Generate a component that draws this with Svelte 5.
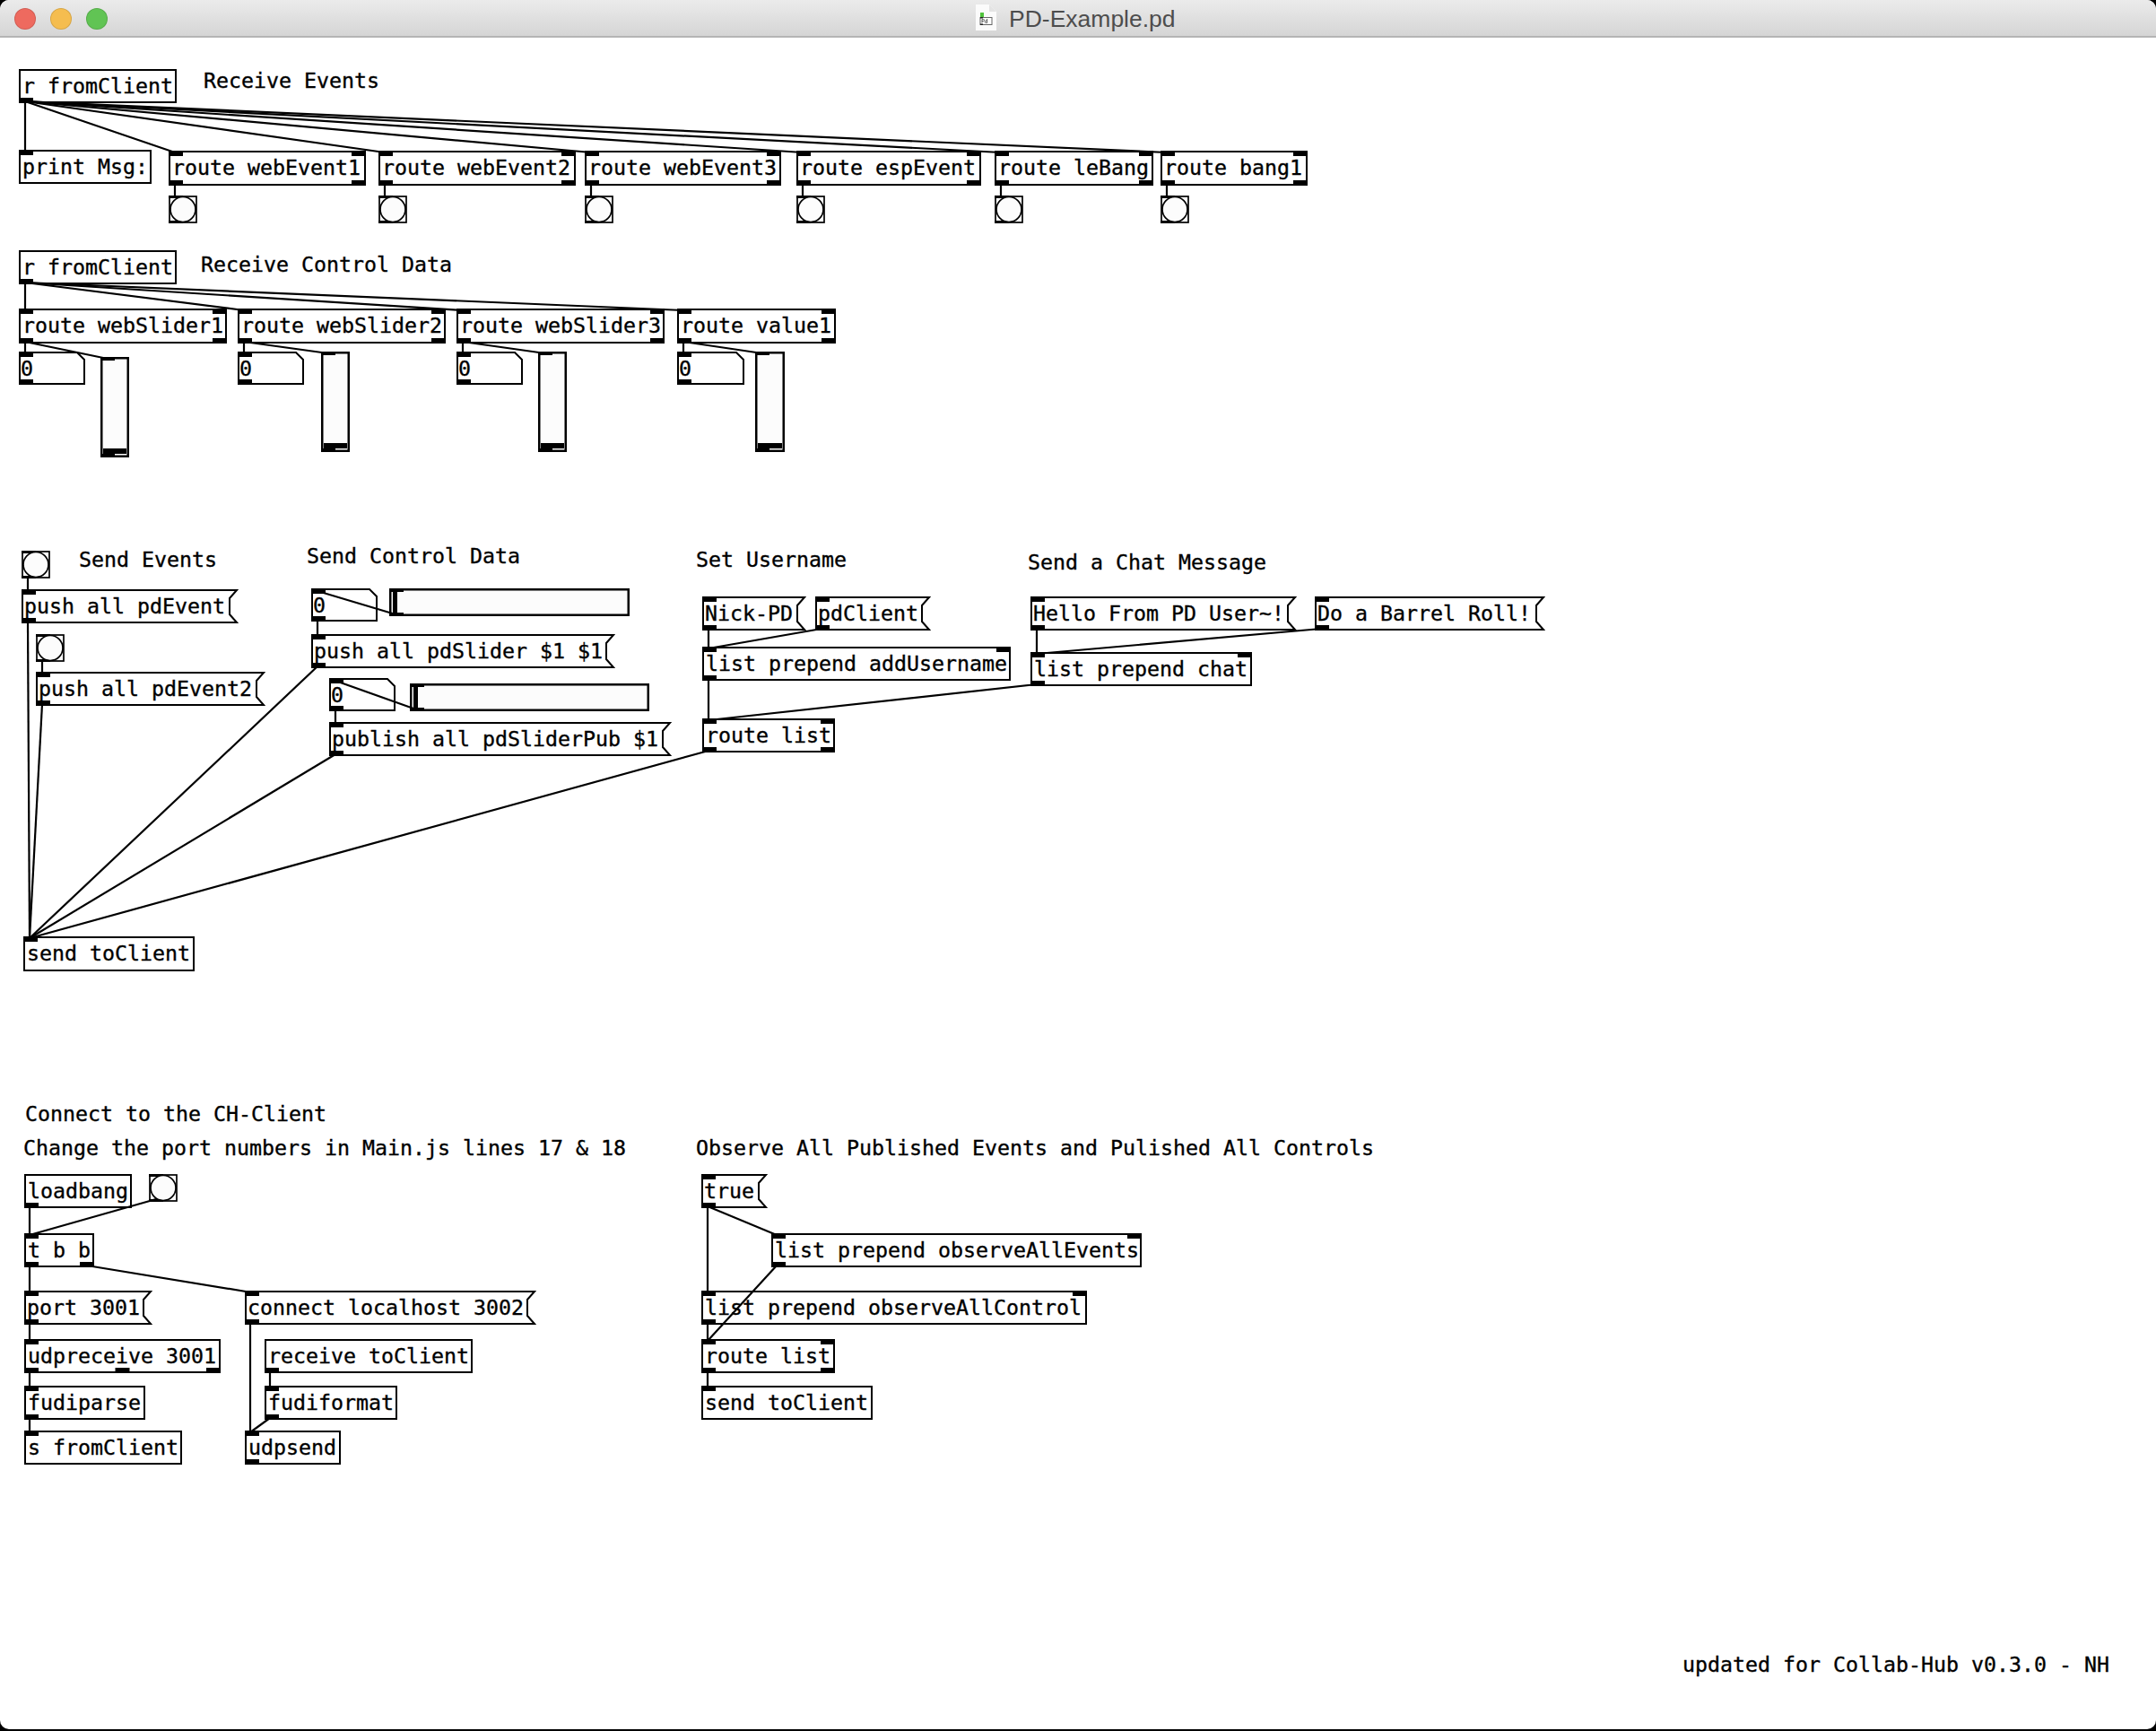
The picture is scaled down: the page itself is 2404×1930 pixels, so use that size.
<script lang="ts">
	// [x0, y0, x1, y1, text, inlets, outlets]
	const objects = [
		[21, 77, 197, 115, 'r fromClient', 0, 1],
		[21, 167, 169, 205, 'print Msg:', 1, 0],
		[188, 168, 408, 207, 'route webEvent1', 2, 2],
		[422, 168, 642, 207, 'route webEvent2', 2, 2],
		[652, 168, 871, 207, 'route webEvent3', 2, 2],
		[888, 168, 1094, 207, 'route espEvent', 2, 2],
		[1109, 168, 1286, 207, 'route leBang', 2, 2],
		[1294, 168, 1458, 207, 'route bang1', 2, 2],

		[21, 279, 197, 317, 'r fromClient', 0, 1],
		[21, 344, 253, 383, 'route webSlider1', 2, 2],
		[265, 344, 497, 383, 'route webSlider2', 2, 2],
		[509, 344, 741, 383, 'route webSlider3', 2, 2],
		[755, 344, 932, 383, 'route value1', 2, 2],

		[26, 1044, 217, 1083, 'send toClient', 1, 0],
		[783, 721, 1127, 759, 'list prepend addUsername', 2, 1],
		[1149, 727, 1396, 765, 'list prepend chat', 2, 1],
		[783, 801, 931, 839, 'route list', 2, 2],

		[27, 1309, 147, 1347, 'loadbang', 0, 1],
		[27, 1375, 105, 1413, 't b b', 1, 2],
		[27, 1493, 246, 1531, 'udpreceive 3001', 1, 3],
		[295, 1493, 527, 1531, 'receive toClient', 0, 1],
		[27, 1545, 162, 1583, 'fudiparse', 1, 1],
		[295, 1545, 443, 1583, 'fudiformat', 1, 1],
		[27, 1595, 203, 1633, 's fromClient', 1, 0],
		[273, 1595, 380, 1633, 'udpsend', 1, 1],

		[860, 1375, 1273, 1413, 'list prepend observeAllEvents', 2, 1],
		[782, 1439, 1212, 1477, 'list prepend observeAllControl', 2, 1],
		[782, 1493, 931, 1531, 'route list', 2, 2],
		[782, 1545, 973, 1583, 'send toClient', 1, 0]
	];

	const messages = [
		[24, 657, 265, 695, 'push all pdEvent'],
		[40, 749, 295, 787, 'push all pdEvent2'],
		[347, 707, 685, 745, 'push all pdSlider $1 $1'],
		[367, 805, 748, 843, 'publish all pdSliderPub $1'],
		[783, 665, 898, 703, 'Nick-PD'],
		[909, 665, 1037, 703, 'pdClient'],
		[1149, 665, 1445, 703, 'Hello From PD User~!'],
		[1466, 665, 1722, 703, 'Do a Barrel Roll!'],
		[27, 1439, 169, 1477, 'port 3001'],
		[273, 1439, 597, 1477, 'connect localhost 3002'],
		[782, 1309, 855, 1347, 'true']
	];

	const numbers = [
		[21, 392, 95],
		[265, 392, 339],
		[509, 392, 583],
		[755, 392, 830],
		[347, 656, 421],
		[367, 756, 441]
	];

	const bangs = [
		[188, 218],
		[422, 218],
		[652, 218],
		[888, 218],
		[1109, 218],
		[1294, 218],
		[24, 614],
		[40, 707],
		[166, 1309]
	];

	const vsliders = [
		[112, 398, 144, 510],
		[358, 392, 390, 504],
		[600, 392, 632, 504],
		[842, 392, 875, 504]
	];

	const hsliders = [
		[434, 656, 702, 687],
		[457, 762, 724, 793]
	];

	const labels = [
		[227, 98, 'Receive Events'],
		[224, 303, 'Receive Control Data'],
		[88, 632, 'Send Events'],
		[342, 628, 'Send Control Data'],
		[776, 632, 'Set Username'],
		[1146, 635, 'Send a Chat Message'],
		[28, 1250, 'Connect to the CH-Client'],
		[26, 1288, 'Change the port numbers in Main.js lines 17 & 18'],
		[776, 1288, 'Observe All Published Events and Pulished All Controls'],
		[1876, 1864, 'updated for Collab-Hub v0.3.0 - NH']
	];

	const wires = [
		[28, 113, 28, 169],
		[28, 113, 195, 170],
		[28, 113, 429, 170],
		[28, 113, 659, 170],
		[28, 113, 895, 170],
		[28, 113, 1116, 170],
		[28, 113, 1301, 170],
		[195, 205, 195, 220],
		[429, 205, 429, 220],
		[659, 205, 659, 220],
		[895, 205, 895, 220],
		[1116, 205, 1116, 220],
		[1301, 205, 1301, 220],

		[28, 315, 28, 346],
		[28, 315, 272, 346],
		[28, 315, 516, 346],
		[28, 315, 762, 346],
		[28, 381, 28, 394],
		[28, 381, 120, 400],
		[272, 381, 272, 394],
		[272, 381, 366, 394],
		[516, 381, 516, 394],
		[516, 381, 608, 394],
		[762, 381, 762, 394],
		[762, 381, 850, 394],

		[31, 643, 31, 659],
		[31, 693, 33, 1046],
		[47, 735, 47, 751],
		[47, 785, 33, 1046],
		[354, 691, 354, 709],
		[354, 659, 441, 685],
		[354, 743, 33, 1046],
		[374, 791, 374, 807],
		[374, 759, 464, 791],
		[374, 841, 33, 1046],
		[790, 837, 33, 1046],

		[790, 701, 790, 723],
		[916, 701, 790, 723],
		[1156, 701, 1156, 729],
		[1473, 701, 1156, 729],
		[790, 757, 790, 803],
		[1156, 763, 790, 803],

		[33, 1345, 33, 1377],
		[174, 1337, 33, 1377],
		[33, 1411, 33, 1441],
		[97, 1411, 280, 1441],
		[33, 1475, 33, 1495],
		[33, 1529, 33, 1547],
		[33, 1581, 33, 1597],
		[279, 1475, 279, 1597],
		[301, 1529, 301, 1547],
		[301, 1581, 279, 1597],

		[789, 1345, 789, 1441],
		[789, 1345, 866, 1377],
		[866, 1411, 789, 1495],
		[789, 1475, 789, 1495],
		[789, 1529, 789, 1547]
	];

	function ports(x0, x1, n) {
		if (n === 1) return [x0];
		let step = (x1 - x0 - 16) / (n - 1);
		return Array.from({ length: n }, (_, i) => x0 + i * step);
	}
</script>

<div class="window">
	<header class="titlebar">
		<div class="lights">
			<span class="light red"></span>
			<span class="light yellow"></span>
			<span class="light green"></span>
		</div>
		<div class="title">
			<svg class="fileicon" width="23" height="29" viewBox="0 0 23 29">
				<path d="M0 0H15L23 8V29H0Z" fill="#fbfbfb" />
				<path d="M15 0L23 8H15Z" fill="#e4e4e4" />
				<rect x="5" y="9" width="4" height="5" fill="#4fc23c" />
				<rect x="5" y="14.5" width="13" height="8" fill="#fff" stroke="#666" />
				<rect x="5" y="14" width="3" height="1.5" fill="#222" />
				<rect x="5" y="21.5" width="3" height="1.5" fill="#222" />
				<path d="M7 20.5V16.5H8.4Q9.6 16.5 9.6 17.5T8.4 18.6H7M12.6 16V20.5H11.4Q10.3 20.5 10.3 19.4T11.4 18.2H12.6" fill="none" stroke="#222" stroke-width=".7" />
			</svg>
			<span>PD-Example.pd</span>
		</div>
	</header>

	<svg class="canvas" width="2404" height="1930" viewBox="0 42 2404 1930">
		{#each objects as [x0, y0, x1, y1, text, ins, outs]}
			<rect class="box" x={x0 + 1} y={y0 + 1} width={x1 - x0 - 2} height={y1 - y0 - 2} />
			{#each ports(x0, x1, ins) as px}
				<rect x={px} y={y0} width="16" height="6" />
			{/each}
			{#each ports(x0, x1, outs) as px}
				<rect x={px} y={y1 - 6} width="16" height="6" />
			{/each}
			<text x={x0 + 4} y={y0 + 27}>{text}</text>
		{/each}

		{#each messages as [x0, y0, x1, y1, text]}
			<polygon
				class="box"
				points="{x0 + 1},{y0 + 1} {x1 - 1},{y0 + 1} {x1 - 9},{y0 + 10} {x1 - 9},{y1 - 10} {x1 - 1},{y1 - 1} {x0 + 1},{y1 - 1}"
			/>
			<rect x={x0} y={y0} width="16" height="6" />
			<rect x={x0} y={y1 - 6} width="16" height="6" />
			<text x={x0 + 3} y={y0 + 27}>{text}</text>
		{/each}

		{#each numbers as [x0, y0, x1]}
			<polygon
				class="box"
				points="{x0 + 1},{y0 + 1} {x1 - 9},{y0 + 1} {x1 - 1},{y0 + 9} {x1 - 1},{y0 + 36} {x0 + 1},{y0 + 36}"
			/>
			<rect x={x0} y={y0} width="16" height="6" />
			<rect x={x0} y={y0 + 31} width="16" height="6" />
			<text x={x0 + 2} y={y0 + 27}>0</text>
		{/each}

		{#each bangs as [x0, y0]}
			<rect class="bang" x={x0 + 1} y={y0 + 1} width="30" height="29" />
			<rect x={x0} y={y0} width="16" height="3" />
			<rect x={x0} y={y0 + 28} width="16" height="3" />
			<circle class="bang" cx={x0 + 16} cy={y0 + 15.5} r="14" />
		{/each}

		{#each vsliders as [x0, y0, x1, y1]}
			<rect class="gui" x={x0 + 1.25} y={y0 + 1.25} width={x1 - x0 - 2.5} height={y1 - y0 - 2.5} />
			<rect x={x0} y={y0} width="16" height="4" />
			<rect x={x0 + 3} y={y1 - 10} width={x1 - x0 - 6} height="6" />
			<rect x={x0} y={y1 - 4} width="16" height="4" />
		{/each}

		{#each hsliders as [x0, y0, x1, y1]}
			<rect class="gui" x={x0 + 1.25} y={y0 + 1.25} width={x1 - x0 - 2.5} height={y1 - y0 - 2.5} />
			<rect x={x0} y={y0} width="16" height="4" />
			<rect x={x0} y={y1 - 4} width="16" height="4" />
			<rect x={x0 + 4} y={y0 + 2} width="5" height={y1 - y0 - 4} />
		{/each}

		{#each labels as [x, y, text]}
			<text {x} {y}>{text}</text>
		{/each}

		{#each wires as [x1, y1, x2, y2]}
			<line class="wire" {x1} {y1} {x2} {y2} />
		{/each}
	</svg>
</div>

<style>
	:global(body) {
		background: #000;
		overflow: hidden;
	}
	.window {
		height: 1928px;
		border-radius: 10px;
		overflow: hidden;
		background: #fff;
	}
	.titlebar {
		height: 40px;
		border-bottom: 2px solid #b4b4b4;
		background: linear-gradient(#ebebeb, #d5d5d5);
		display: flex;
		align-items: center;
		position: relative;
	}
	.lights {
		display: flex;
		gap: 16px;
		padding-left: 16px;
		padding-top: 1px;
	}
	.light {
		width: 22px;
		height: 22px;
		border-radius: 50%;
		border: 1px solid rgba(0, 0, 0, 0.12);
	}
	.red {
		background: #ee6a5f;
	}
	.yellow {
		background: #f5bd4f;
	}
	.green {
		background: #61c454;
	}
	.title {
		position: absolute;
		left: 1088px;
		top: 0;
		height: 42px;
		display: flex;
		align-items: center;
		gap: 14px;
		font-family: 'Liberation Sans', Arial, sans-serif;
		font-size: 26.5px;
		color: #4d4d4d;
	}
	.fileicon {
		margin-top: -3px;
	}
	.canvas {
		display: block;
	}
	.canvas text {
		font-family: 'DejaVu Sans Mono', monospace;
		font-size: 23.25px;
		fill: #000;
		stroke: #000;
		stroke-width: 0.35px;
	}
	.box {
		fill: #fff;
		stroke: #000;
		stroke-width: 2;
	}
	.gui {
		fill: #fcfcfc;
		stroke: #000;
		stroke-width: 2.5;
	}
	.bang {
		fill: #fcfcfc;
		stroke: #000;
		stroke-width: 1.7;
	}
	.wire {
		stroke: #000;
		stroke-width: 2.2;
	}
</style>
